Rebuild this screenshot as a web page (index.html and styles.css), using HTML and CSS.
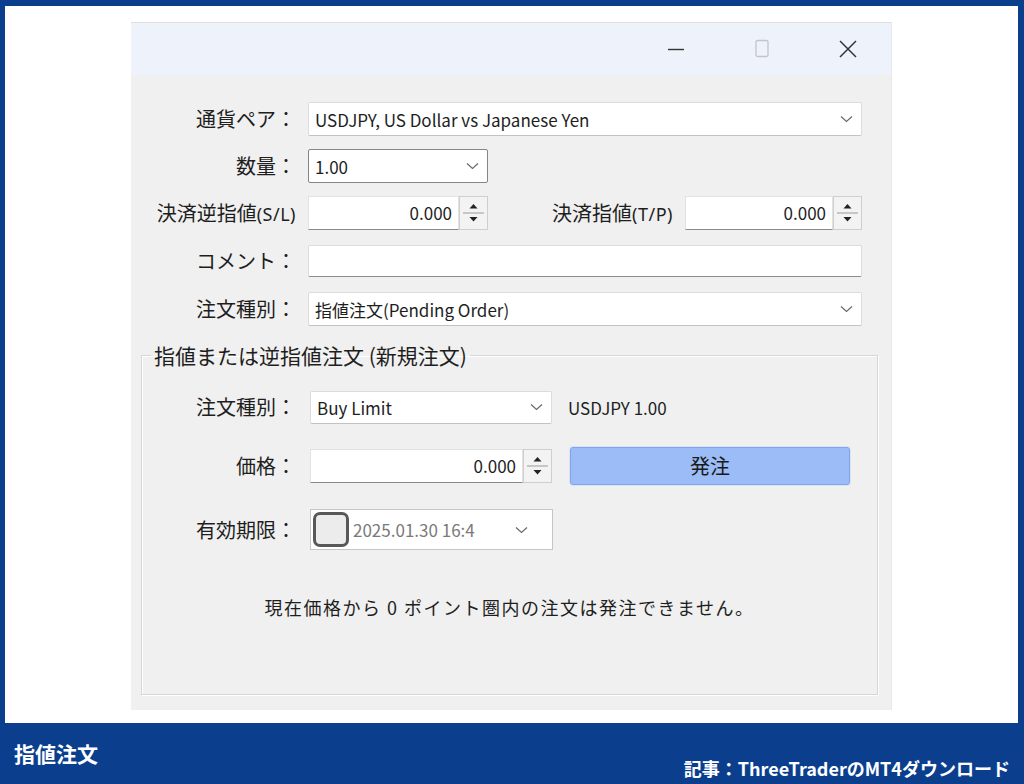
FILE: index.html
```html
<!DOCTYPE html>
<html lang="ja">
<head>
<meta charset="utf-8">
<title>指値注文</title>
<link rel="stylesheet" href="styles.css">
</head>
<body>
<div class="frame">
  <div class="canvas">
    <div class="window">
      <div class="titlebar">
        <span class="tb-btn"><svg width="18" height="18" viewBox="0 0 18 18"><line x1="1" y1="9.5" x2="17" y2="9.5" stroke="#333" stroke-width="1.4"/></svg></span>
        <span class="tb-btn"><svg width="18" height="20" viewBox="0 0 18 20"><rect x="3" y="1.5" width="12" height="16" rx="1.5" fill="none" stroke="#c4c4c4" stroke-width="1.3"/></svg></span>
        <span class="tb-btn"><svg width="20" height="20" viewBox="0 0 20 20"><path d="M2 2 L18 18 M18 2 L2 18" stroke="#333" stroke-width="1.5" fill="none"/></svg></span>
      </div>
      <div class="content">
        <div class="row r1">
          <span class="lbl">通貨ペア：</span>
          <div class="select w-full"><span class="val">USDJPY, US Dollar vs Japanese Yen</span><svg class="chev" width="13" height="8" viewBox="0 0 13 8"><path d="M1 1.5 L6.5 6.5 L12 1.5" fill="none" stroke="#6a6a6a" stroke-width="1.2"/></svg></div>
        </div>
        <div class="row r2">
          <span class="lbl">数量：</span>
          <div class="select w-qty active"><span class="val">1.00</span><svg class="chev" width="13" height="8" viewBox="0 0 13 8"><path d="M1 1.5 L6.5 6.5 L12 1.5" fill="none" stroke="#6a6a6a" stroke-width="1.2"/></svg></div>
        </div>
        <div class="row r3">
          <span class="lbl">決済逆指値<span class="lat">(S/L)</span></span>
          <div class="spin w-sl">
            <div class="spin-input">0.000</div>
            <div class="spin-btns"><svg width="29" height="34" viewBox="0 0 29 34"><rect x="0.5" y="0.5" width="28" height="33" fill="#f3f3f3" stroke="#cfcfcf"/><line x1="4" y1="17" x2="25" y2="17" stroke="#9a9a9a" stroke-width="1"/><polygon points="10.5,12.5 18.5,12.5 14.5,8" fill="#222"/><polygon points="10.5,21 18.5,21 14.5,25.5" fill="#222"/></svg></div>
          </div>
          <span class="lbl lbl-tp">決済指値<span class="lat">(T/P)</span></span>
          <div class="spin w-tp">
            <div class="spin-input">0.000</div>
            <div class="spin-btns"><svg width="29" height="34" viewBox="0 0 29 34"><rect x="0.5" y="0.5" width="28" height="33" fill="#f3f3f3" stroke="#cfcfcf"/><line x1="4" y1="17" x2="25" y2="17" stroke="#9a9a9a" stroke-width="1"/><polygon points="10.5,12.5 18.5,12.5 14.5,8" fill="#222"/><polygon points="10.5,21 18.5,21 14.5,25.5" fill="#222"/></svg></div>
          </div>
        </div>
        <div class="row r4">
          <span class="lbl">コメント：</span>
          <div class="text w-full"></div>
        </div>
        <div class="row r5">
          <span class="lbl">注文種別：</span>
          <div class="select w-full"><span class="val">指値注文(Pending Order)</span><svg class="chev" width="13" height="8" viewBox="0 0 13 8"><path d="M1 1.5 L6.5 6.5 L12 1.5" fill="none" stroke="#6a6a6a" stroke-width="1.2"/></svg></div>
        </div>

        <fieldset class="group">
          <legend>指値または逆指値注文 (新規注文)</legend>
          <div class="grow g1">
            <span class="glbl">注文種別：</span>
            <div class="select w-type"><span class="val">Buy Limit</span><svg class="chev" width="13" height="8" viewBox="0 0 13 8"><path d="M1 1.5 L6.5 6.5 L12 1.5" fill="none" stroke="#6a6a6a" stroke-width="1.2"/></svg></div>
            <span class="info">USDJPY 1.00</span>
          </div>
          <div class="grow g2">
            <span class="glbl">価格：</span>
            <div class="spin w-price">
              <div class="spin-input">0.000</div>
              <div class="spin-btns"><svg width="29" height="34" viewBox="0 0 29 34"><rect x="0.5" y="0.5" width="28" height="33" fill="#f3f3f3" stroke="#cfcfcf"/><line x1="4" y1="17" x2="25" y2="17" stroke="#9a9a9a" stroke-width="1"/><polygon points="10.5,12.5 18.5,12.5 14.5,8" fill="#222"/><polygon points="10.5,21 18.5,21 14.5,25.5" fill="#222"/></svg></div>
            </div>
            <div class="order-btn">発注</div>
          </div>
          <div class="grow g3">
            <span class="glbl">有効期限：</span>
            <div class="date">
              <span class="check"></span>
              <span class="date-val">2025.01.30 16:4</span>
              <svg class="chev" width="13" height="8" viewBox="0 0 13 8"><path d="M1 1.5 L6.5 6.5 L12 1.5" fill="none" stroke="#6a6a6a" stroke-width="1.2"/></svg>
            </div>
          </div>
          <p class="msg">現在価格から 0 ポイント圏内の注文は発注できません。</p>
        </fieldset>
      </div>
    </div>
  </div>
  <div class="caption">
    <span class="cap-left">指値注文</span>
    <span class="cap-right">記事：ThreeTraderのMT4ダウンロード</span>
  </div>
</div>
</body>
</html>
```

FILE: styles.css
```css
* { box-sizing: border-box; }
html, body { margin: 0; padding: 0; }
body {
  width: 1024px;
  height: 784px;
  background: #0b3f8e;
  font-family: "Noto Sans CJK JP", "Noto Sans", sans-serif;
  color: #1e1e1e;
  overflow: hidden;
}
.frame { width: 1024px; height: 784px; display: flex; flex-direction: column; }
.canvas {
  margin: 6px 6px 0 5px;
  height: 717px;
  background: #ffffff;
  padding: 16px 0 0 126px;
}
.window {
  width: 761px;
  height: 688px;
  background: #f0f0f0;
  border-top: 1px solid #dedede;
  border-right: 1px solid #e8e8e8;
}
.titlebar {
  height: 52px;
  background: #eef3fb;
  display: flex;
  justify-content: flex-end;
  align-items: center;
}
.tb-btn {
  width: 86px;
  height: 52px;
  display: flex;
  align-items: center;
  justify-content: center;
}
.content { padding-top: 27px; }
.row { display: flex; align-items: center; height: 34px; }
.r2, .r3 { margin-top: 13px; }
.r4 { margin-top: 15px; height: 32px; }
.r5 { margin-top: 15px; }
.lbl {
  width: 165px;
  text-align: right;
  font-size: 20px;
  line-height: 24px;
  margin-right: 12px;
  white-space: nowrap;
}
.lat { font-family: "Noto Sans", sans-serif; font-size: 18px; letter-spacing: 0.5px; }
.lbl-tp { width: 185px; }
.select {
  height: 34px;
  background: #fff;
  border: 1px solid #dcdcdc;
  border-bottom-color: #c2c2c2;
  border-radius: 2px;
  display: flex;
  align-items: center;
  justify-content: space-between;
  padding: 0 8px 0 6px;
  font-size: 17px;
}
.select.active { border-color: #858585; }
.val { white-space: nowrap; }
.w-full { width: 554px; }
.w-qty { width: 180px; }
.w-sl { width: 180px; }
.w-tp { width: 177px; }
.spin { display: flex; height: 34px; }
.spin-input {
  flex: 1;
  background: #fff;
  border: 1px solid #e2e2e2;
  border-bottom: 1px solid #8a8a8a;
  text-align: right;
  padding-right: 6px;
  font-size: 17px;
  line-height: 32px;
}
.spin-btns { width: 29px; height: 34px; }
.spin-btns svg { display: block; }
.text {
  height: 32px;
  background: #fff;
  border: 1px solid #dcdcdc;
  border-bottom-color: #8c8c8c;
  border-radius: 2px;
}
.group {
  margin: 17px 0 0 10px;
  width: 737px;
  height: 352px;
  border: 1px solid #d6d6d6;
  box-shadow: inset 1px 1px 0 #ffffff, 1px 1px 0 #ffffff;
  padding: 23px 0 0 0;
}
.group legend {
  font-size: 21px;
  line-height: 24px;
  padding: 0 3px;
  margin-left: 9px;
}
.grow { display: flex; align-items: center; height: 34px; }
.g2 { margin-top: 25px; }
.g3 { margin-top: 26px; height: 41px; }
.glbl {
  width: 154px;
  text-align: right;
  font-size: 20px;
  line-height: 24px;
  margin-right: 14px;
  white-space: nowrap;
}
.w-type { width: 242px; height: 33px; }
.info { margin-left: 16px; font-size: 17px; }
.w-price { width: 242px; }
.order-btn {
  margin-left: 18px;
  width: 280px;
  height: 38px;
  background: #9bbcf6;
  border: 1px solid #7fa5ec;
  border-radius: 3px;
  box-shadow: 0 0 0 1px #dbe4f4;
  text-align: center;
  font-size: 20px;
  line-height: 35px;
  color: #1a1a1a;
}
.date {
  width: 243px;
  height: 41px;
  background: #fff;
  border: 1px solid #c6c6c6;
  display: flex;
  align-items: center;
  padding: 0 24px 0 2px;
}
.check {
  width: 36px;
  height: 35px;
  border: 3px solid #585858;
  border-radius: 7px;
  background: #ececec;
}
.date-val { margin-left: 4px; font-size: 17px; color: #7a7a7a; flex: 1; }
.msg {
  margin: 45px 0 0 0;
  text-align: center;
  font-size: 18px;
  line-height: 24px;
  letter-spacing: 1.5px;
}
.caption {
  flex: 1;
  display: flex;
  justify-content: space-between;
  padding: 0 14px 0 14px;
  color: #fff;
  font-weight: 700;
}
.cap-left { font-size: 21px; line-height: 26px; margin-top: 17px; align-self: flex-start; }
.cap-right { font-size: 18px; line-height: 24px; align-self: flex-end; margin-bottom: 4px; }
```
